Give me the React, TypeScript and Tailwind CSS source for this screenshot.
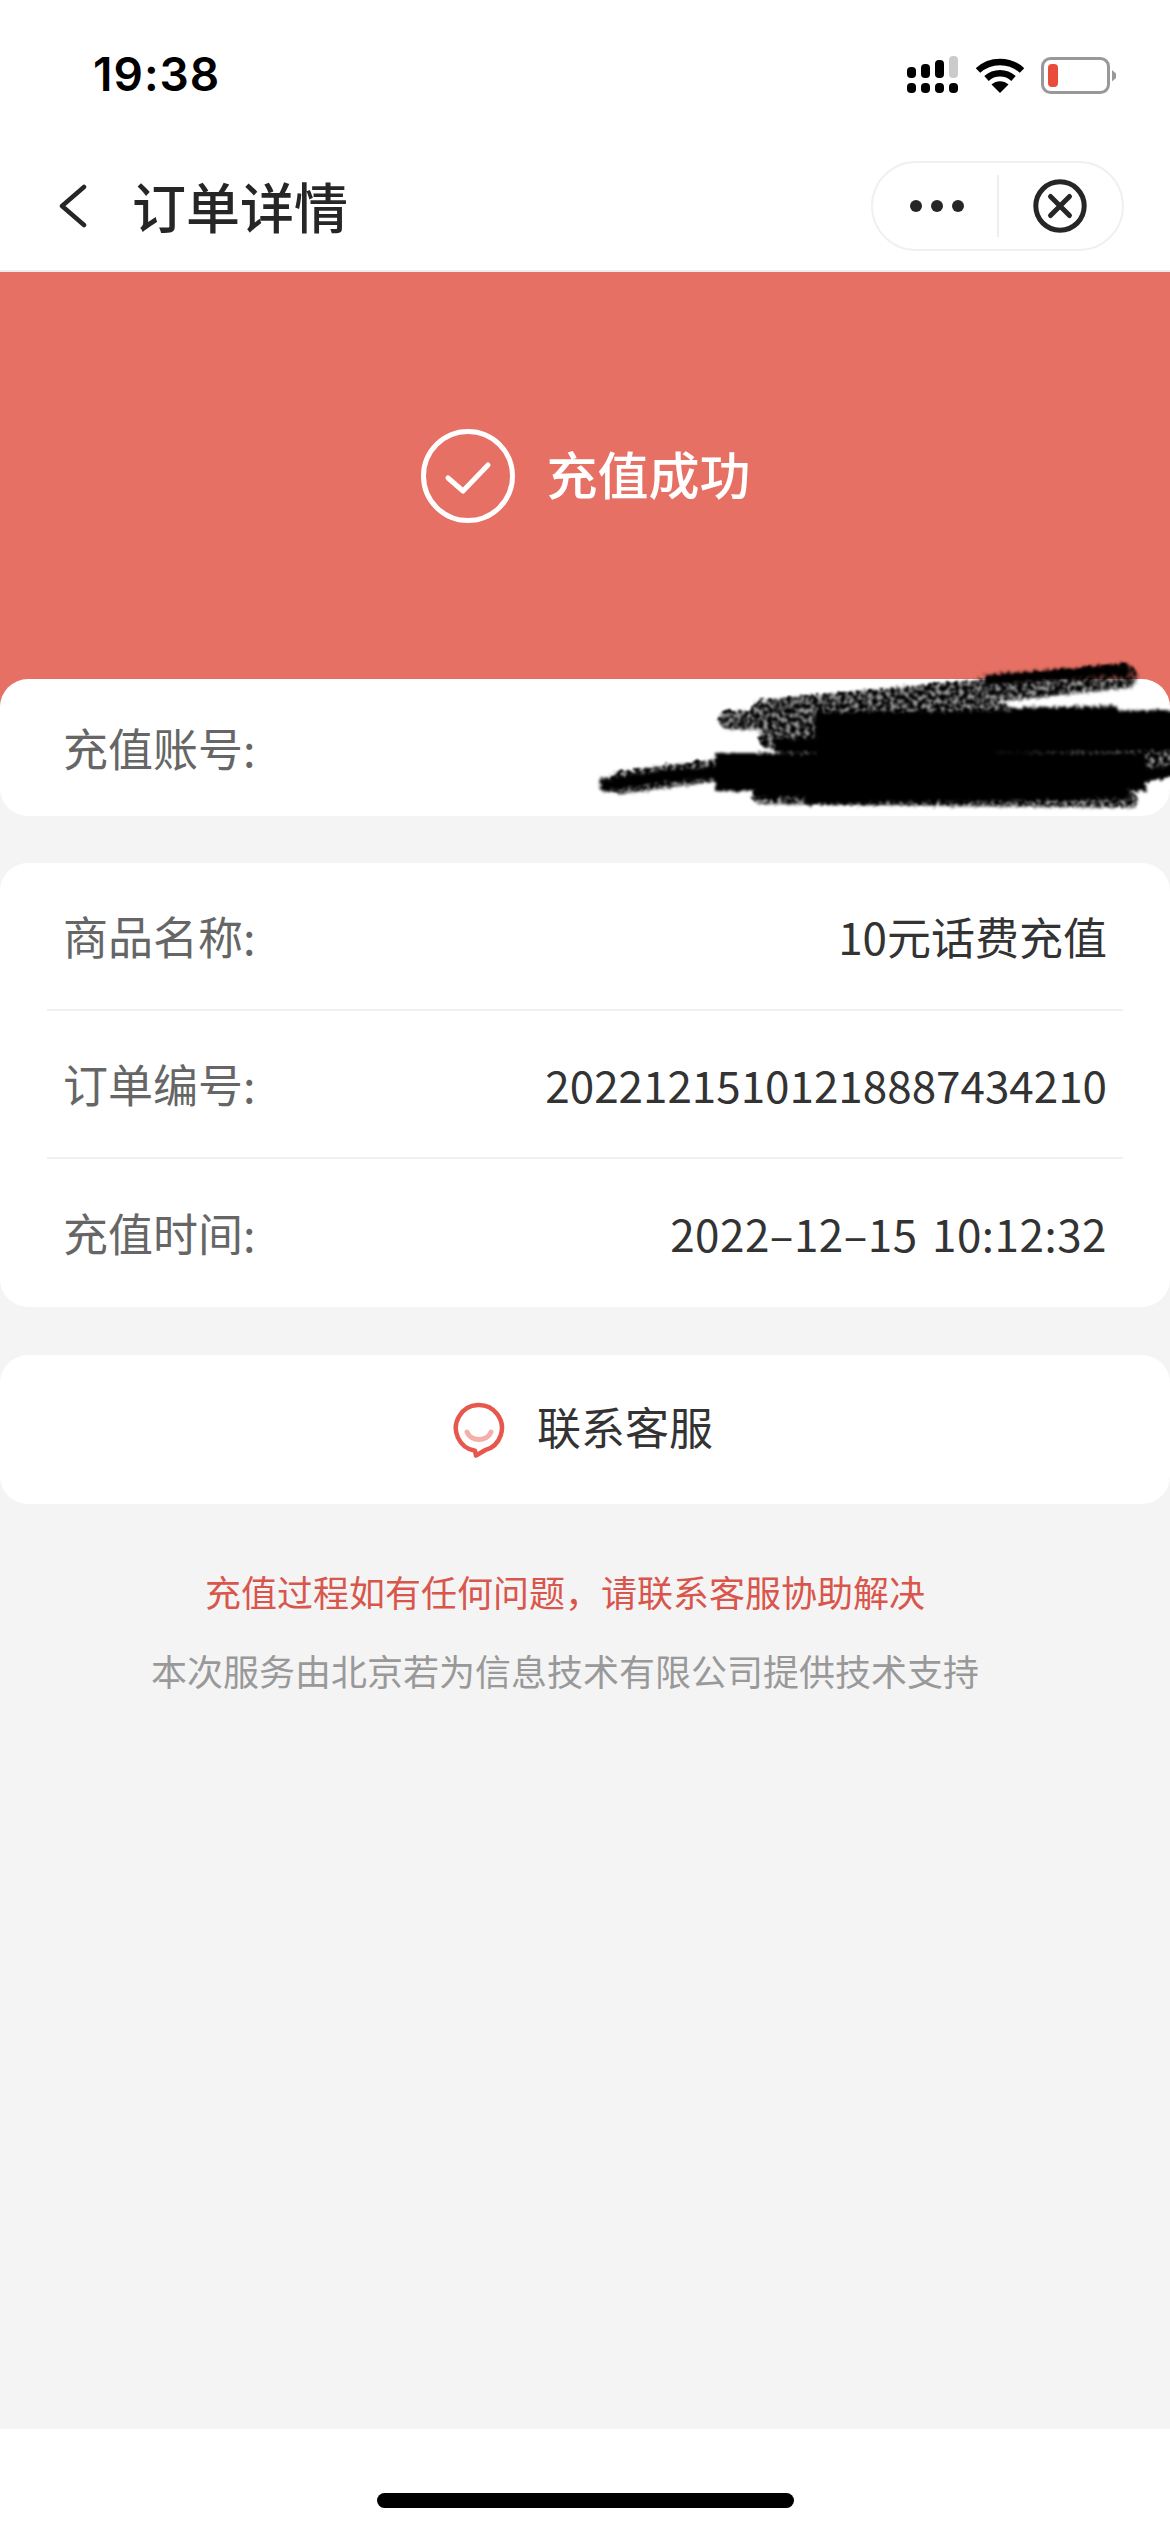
const cjk = "font-['Noto_Sans_CJK_SC','Noto_Sans',sans-serif]";

function StatusIcons() {
  return (
    <div className="flex items-center">
      <svg width="52" height="38" viewBox="0 0 52 38" className="mr-[17px]">
        <rect x="0" y="11" width="9" height="11" rx="4" fill="#000" />
        <rect x="14" y="8" width="9" height="14" rx="4" fill="#000" />
        <rect x="28" y="4" width="9" height="18" rx="4" fill="#000" />
        <rect x="42" y="0" width="9" height="22" rx="4" fill="#cbcbcb" />
        <rect x="0" y="27" width="9" height="10" rx="4" fill="#000" />
        <rect x="14" y="27" width="9" height="10" rx="4" fill="#000" />
        <rect x="28" y="27" width="9" height="10" rx="4" fill="#000" />
        <rect x="42" y="27" width="9" height="10" rx="4" fill="#000" />
      </svg>
      <svg width="48" height="36" viewBox="0 0 48 36" className="mr-[17px]">
        <path d="M2 13.5C14 2 34 2 46 13.5" fill="none" stroke="#000" strokeWidth="6.5" />
        <path d="M10.5 21.5C18 14.5 30 14.5 37.5 21.5" fill="none" stroke="#000" strokeWidth="6.5" />
        <path d="M24 36L15.5 27.5C20 23 28 23 32.5 27.5Z" fill="#000" />
      </svg>
      <svg width="76" height="37" viewBox="0 0 76 37">
        <rect x="1.5" y="1.5" width="66" height="34" rx="8" fill="#fff" stroke="#999" strokeWidth="3" />
        <rect x="7" y="7" width="10" height="23" rx="4" fill="#ea4c3c" />
        <path d="M71 13L75 16.5V21L71 24.5Z" fill="#999" />
      </svg>
    </div>
  );
}

function Capsule() {
  return (
    <div className="flex h-[90px] w-[253px] items-center rounded-full border-2 border-[#f0f0f0] bg-white">
      <div className="flex w-[124px] items-center justify-center gap-[9px] pl-[3px]">
        <span className="h-3 w-3 rounded-full bg-[#262626]" />
        <span className="h-3 w-3 rounded-full bg-[#262626]" />
        <span className="h-3 w-3 rounded-full bg-[#262626]" />
      </div>
      <div className="h-[62px] w-[2px] bg-[#eeeeee]" />
      <div className="flex flex-1 items-center justify-center pr-[1px]">
        <svg width="54" height="54" viewBox="0 0 54 54" fill="none" stroke="#262626" strokeWidth="5" strokeLinecap="round">
          <circle cx="27" cy="27" r="24.2" />
          <path d="M17.5 17.5L36.5 36.5M36.5 17.5L17.5 36.5" />
        </svg>
      </div>
    </div>
  );
}

const softStrokes = [
  { d: "M765 712L960 694L1125 676", w: 24 },
  { d: "M770 718L1000 716", w: 26 },
  { d: "M728 720L790 722", w: 18 },
  { d: "M770 738L860 738", w: 22 },
  { d: "M620 783L720 770", w: 22 },
  { d: "M760 796L1130 800", w: 16 },
  { d: "M1130 770L1170 760", w: 30 },
];

function Scribble() {
  // redaction scrawl over the account number, coordinates are page pixels
  return (
    <svg width="610" height="170" viewBox="560 655 610 170" className="absolute right-0 top-[-24px]">
      <defs>
        <filter id="rough" x="-5%" y="-20%" width="110%" height="140%">
          <feTurbulence type="fractalNoise" baseFrequency="0.3" numOctaves="2" seed="4" result="n" />
          <feDisplacementMap in="SourceGraphic" in2="n" scale="9" result="d" />
          <feGaussianBlur in="d" stdDeviation="1.8" />
        </filter>
        <filter id="speck" x="-5%" y="-30%" width="110%" height="160%">
          <feTurbulence type="fractalNoise" baseFrequency="0.22" numOctaves="2" seed="9" result="n" />
          <feDisplacementMap in="SourceGraphic" in2="n" scale="9" result="d" />
          <feColorMatrix in="n" type="matrix" values="0 0 0 0 0  0 0 0 0 0  0 0 0 0 0  0 0 0 3 -0.9" result="m" />
          <feComposite in="d" in2="m" operator="in" result="c" />
          <feGaussianBlur in="c" stdDeviation="1.3" />
        </filter>
      </defs>
      <g filter="url(#rough)" fill="none" stroke="#000" strokeLinecap="round" opacity="0.4">
        {softStrokes.map((s) => (
          <path key={s.d} d={s.d} strokeWidth={s.w} />
        ))}
      </g>
      <g filter="url(#speck)" fill="none" stroke="#000" strokeLinecap="round">
        {softStrokes.map((s) => (
          <path key={s.d} d={s.d} strokeWidth={s.w} />
        ))}
      </g>
      <g filter="url(#rough)" fill="none" stroke="#000" strokeLinecap="butt">
        <path d="M985 680L1128 669" strokeWidth="10" />
        <path d="M1010 712L1118 710" strokeWidth="8" />
        <path d="M815 733L1175 731" strokeWidth="42" />
        <path d="M775 745L860 746" strokeWidth="14" />
        <path d="M715 772L1146 772" strokeWidth="38" />
        <path d="M600 786L660 777L720 772" strokeWidth="12" />
        <path d="M755 790L815 790" strokeWidth="14" />
        <path d="M805 795L1130 790" strokeWidth="18" />
        <path d="M1140 776L1175 770" strokeWidth="12" />
      </g>
    </svg>
  );
}

function InfoRow({ label, value, line, tight }: { label: string; value: string; line?: boolean; tight?: boolean }) {
  return (
    <div className={`mx-[47px] flex h-[148px] items-center justify-between ${line ? "border-b-2 border-[#f0f0f0]" : ""}`}>
      <span className="pl-4 text-[45px] text-[#666666]">{label}</span>
      <span className={`pr-4 text-[44px] text-[#333333] ${tight ? "tracking-[0.5px] [word-spacing:4px]" : ""}`}>{value}</span>
    </div>
  );
}

export default function App() {
  return (
    <div className={`${cjk} flex h-[2532px] w-[1170px] flex-col overflow-hidden bg-[#f4f4f4]`}>
      {/* status bar */}
      <div className="flex h-[130px] items-start justify-between bg-white pl-[93px] pr-[53px] pt-[56px]">
        <span className="font-['Inter',sans-serif] text-[46px] font-semibold leading-[37px] tracking-[1px] text-black">19:38</span>
        <StatusIcons />
      </div>

      {/* nav bar */}
      <div className="flex h-[142px] items-center border-b-2 border-[#ededed] bg-white pl-[58px] pr-[46px] pt-[12px]">
        <svg width="30" height="44" viewBox="0 0 30 44" fill="none" stroke="#262626" strokeWidth="4.5" strokeLinecap="round" strokeLinejoin="round">
          <path d="M26 3L4 22L26 41" />
        </svg>
        <h1 className="ml-[44px] flex-1 text-[54px] font-medium leading-none text-[#262626]">订单详情</h1>
        <Capsule />
      </div>

      {/* success banner */}
      <div className="flex h-[437px] items-start justify-center gap-[31px] bg-[#e57063] pl-[2px] pt-[157px]">
        <svg width="94" height="94" viewBox="0 0 94 94" fill="none" stroke="#fff" strokeLinecap="round" strokeLinejoin="round">
          <circle cx="47" cy="47" r="44.5" strokeWidth="5" />
          <path d="M27 49L42 62L67 36" strokeWidth="5" />
        </svg>
        <span className="mt-[9px] text-[51px] font-medium leading-[70px] text-white">充值成功</span>
      </div>

      {/* account */}
      <div className="relative z-10 -mt-[30px] flex h-[137px] items-center rounded-[28px] bg-white pl-[63px]">
        <span className="text-[45px] text-[#666666]">充值账号:</span>
        <Scribble />
      </div>

      {/* order info */}
      <div className="mt-[47px] rounded-[28px] bg-white">
        <InfoRow label="商品名称:" value="10元话费充值" line />
        <InfoRow label="订单编号:" value="20221215101218887434210" line />
        <InfoRow label="充值时间:" value="2022–12–15 10:12:32" tight />
      </div>

      {/* contact */}
      <div className="mt-[48px] flex h-[149px] items-center justify-center gap-[32px] rounded-[28px] bg-white pr-[4px]">
        <svg width="52" height="58" viewBox="0 0 52 58" fill="none">
          <path d="M22 49.7A23 23 0 1 1 32 49.2L23 54.5Z" stroke="#e8574e" strokeWidth="4.5" strokeLinejoin="round" />
          <path d="M14 31C18 41 34 41 38 31" stroke="#f3b0ab" strokeWidth="5" strokeLinecap="round" />
        </svg>
        <span className="mb-[7px] text-[44px] text-[#333333]">联系客服</span>
      </div>

      <p className="mt-[60px] pr-[40px] text-center text-[36px] leading-[54px] text-[#d9564c]">{"充值过程如有任何问题\uFF0C请联系客服协助解决"}</p>
      <p className="mt-[25px] pr-[40px] text-center text-[36px] leading-[54px] text-[#999999]">本次服务由北京若为信息技术有限公司提供技术支持</p>

      {/* home indicator */}
      <div className="mt-auto flex h-[103px] justify-center bg-white pt-[64px]">
        <div className="h-[15px] w-[417px] rounded-full bg-black" />
      </div>
    </div>
  );
}
